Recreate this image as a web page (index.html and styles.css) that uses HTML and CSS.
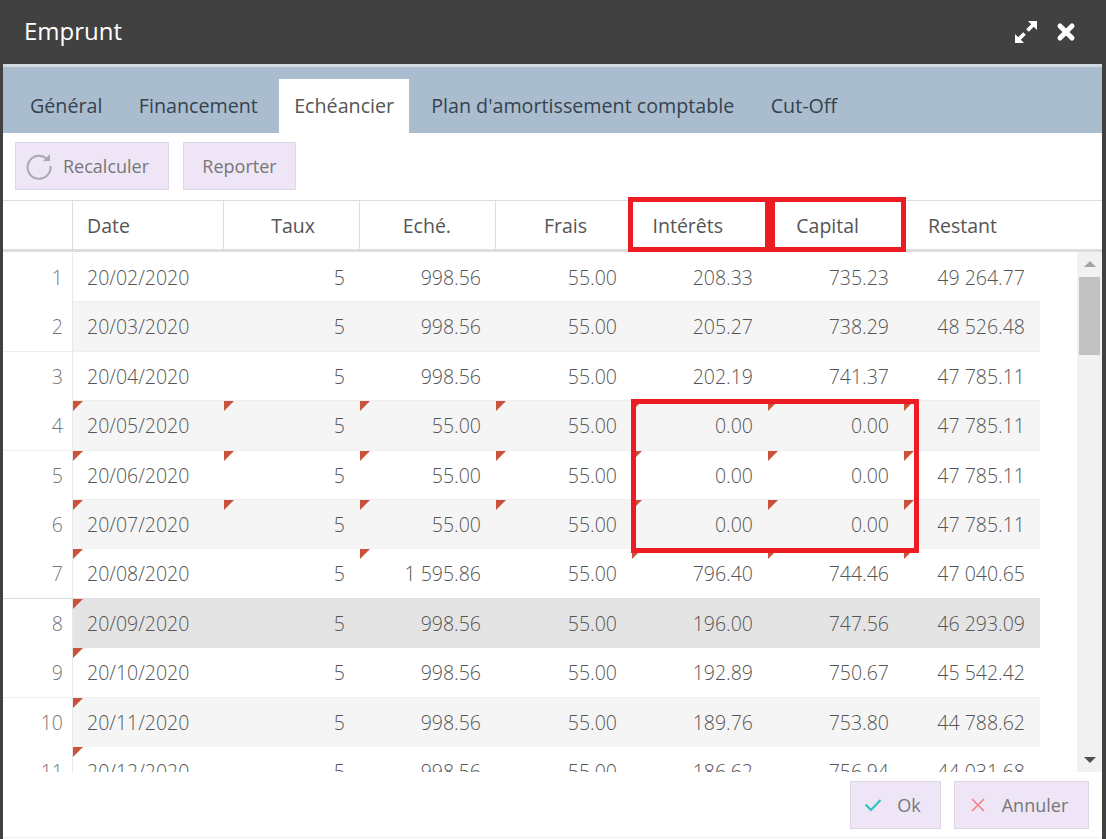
FILE: index.html
```html
<!DOCTYPE html>
<html>
<head>
  <title>Emprunt</title>
  <link rel="stylesheet" href="styles.css">
</head>
<body>

  <div class="dialog">
    <div class="titlebar">
      <span class="title">Emprunt</span>
      <div class="title-icons">
        <svg class="icon-expand" viewBox="0 0 22 22" width="22" height="22">
          <path fill="#fff" d="M13 0H22V9L18.800 5.800 13.800 10.800 11.200 8.200 16.200 3.200Z"/>
          <path fill="#fff" d="M9 22H0V13L3.200 16.200 8.200 11.200 10.800 13.800 5.800 18.800Z"/>
        </svg>
        <svg class="icon-close" viewBox="0 0 20 20" width="20" height="20">
          <path fill="none" stroke="#fff" stroke-width="5" stroke-linecap="round" d="M4 4l12 12M16 4L4 16"/>
        </svg>
      </div>
    </div>

    <div class="tabs">
      <a class="tab" href="#">Général</a>
      <a class="tab" href="#">Financement</a>
      <a class="tab active" href="#">Echéancier</a>
      <a class="tab" href="#">Plan d'amortissement comptable</a>
      <a class="tab" href="#">Cut-Off</a>
    </div>

    <div class="toolbar">
      <button class="btn btn-recalc">
        <svg viewBox="0 0 28 28" width="28" height="28">
          <path fill="none" stroke="#aaa6b0" stroke-width="2" d="M21.500 6.500A11.500 11.500 0 1 0 25.500 14"/>
          <path fill="#aaa6b0" d="M25 2v7h-7z"/>
        </svg>
        Recalculer
      </button>
      <button class="btn btn-report">Reporter</button>
    </div>

    <div class="grid-head">
      <div class="head-cell"></div>
      <div class="head-cell left">Date</div>
      <div class="head-cell">Taux</div>
      <div class="head-cell">Eché.</div>
      <div class="head-cell">Frais</div>
      <div class="head-cell">Intérêts</div>
      <div class="head-cell">Capital</div>
      <div class="head-cell last">Restant</div>
    </div>

    <div class="grid-wrap">
      <div class="grid-body">
        <div class="row"><div class="num">1</div><div class="cell left">20/02/2020</div><div class="cell">5</div><div class="cell">998.56</div><div class="cell">55.00</div><div class="cell">208.33</div><div class="cell">735.23</div><div class="cell">49 264.77</div></div>
        <div class="row odd"><div class="num">2</div><div class="cell left">20/03/2020</div><div class="cell">5</div><div class="cell">998.56</div><div class="cell">55.00</div><div class="cell">205.27</div><div class="cell">738.29</div><div class="cell">48 526.48</div></div>
        <div class="row"><div class="num">3</div><div class="cell left">20/04/2020</div><div class="cell">5</div><div class="cell">998.56</div><div class="cell">55.00</div><div class="cell">202.19</div><div class="cell">741.37</div><div class="cell">47 785.11</div></div>
        <div class="row odd"><div class="num">4</div><div class="cell left flag">20/05/2020</div><div class="cell flag">5</div><div class="cell flag">55.00</div><div class="cell flag">55.00</div><div class="cell flag">0.00</div><div class="cell flag">0.00</div><div class="cell flag">47 785.11</div></div>
        <div class="row"><div class="num">5</div><div class="cell left flag">20/06/2020</div><div class="cell flag">5</div><div class="cell flag">55.00</div><div class="cell flag">55.00</div><div class="cell flag">0.00</div><div class="cell flag">0.00</div><div class="cell flag">47 785.11</div></div>
        <div class="row odd"><div class="num">6</div><div class="cell left flag">20/07/2020</div><div class="cell flag">5</div><div class="cell flag">55.00</div><div class="cell flag">55.00</div><div class="cell flag">0.00</div><div class="cell flag">0.00</div><div class="cell flag">47 785.11</div></div>
        <div class="row"><div class="num">7</div><div class="cell left flag">20/08/2020</div><div class="cell">5</div><div class="cell flag">1 595.86</div><div class="cell">55.00</div><div class="cell flag">796.40</div><div class="cell flag">744.46</div><div class="cell flag">47 040.65</div></div>
        <div class="row selected"><div class="num">8</div><div class="cell left flag">20/09/2020</div><div class="cell">5</div><div class="cell">998.56</div><div class="cell">55.00</div><div class="cell">196.00</div><div class="cell">747.56</div><div class="cell">46 293.09</div></div>
        <div class="row"><div class="num">9</div><div class="cell left flag">20/10/2020</div><div class="cell">5</div><div class="cell">998.56</div><div class="cell">55.00</div><div class="cell">192.89</div><div class="cell">750.67</div><div class="cell">45 542.42</div></div>
        <div class="row odd"><div class="num">10</div><div class="cell left flag">20/11/2020</div><div class="cell">5</div><div class="cell">998.56</div><div class="cell">55.00</div><div class="cell">189.76</div><div class="cell">753.80</div><div class="cell">44 788.62</div></div>
        <div class="row"><div class="num">11</div><div class="cell left flag">20/12/2020</div><div class="cell">5</div><div class="cell">998.56</div><div class="cell">55.00</div><div class="cell">186.62</div><div class="cell">756.94</div><div class="cell">44 031.68</div></div>
      </div>
      <div class="scrollbar">
        <span class="arrow up"></span>
        <div class="track"><div class="thumb"></div></div>
        <span class="arrow down"></span>
      </div>
    </div>

    <div class="footer">
      <button class="btn btn-ok">
        <svg viewBox="0 0 18 14" width="18" height="14">
          <path fill="none" stroke="#2ec4c0" stroke-width="2.2" d="M1.500 6.500l5.500 5.500 9.500-10"/>
        </svg>
        Ok
      </button>
      <button class="btn btn-cancel">
        <svg viewBox="0 0 14 14" width="14" height="14">
          <path fill="none" stroke="#f0828c" stroke-width="1.6" d="M1 1l12 12M13 1L1 13"/>
        </svg>
        Annuler
      </button>
    </div>

    <!-- red annotation boxes drawn over the grid -->
    <div class="mark mark-interets"></div>
    <div class="mark mark-capital"></div>
    <div class="mark mark-zeros"></div>
  </div>

</body>
</html>
```

FILE: styles.css
```css
html, body {
  margin: 0;
  padding: 0;
  height: 100%;
}

body {
  background-color: #414141;
  font-family: "Open Sans", Arial, sans-serif;
  overflow: hidden;
}

.dialog {
  position: relative;
  display: flex;
  flex-direction: column;
  width: 1099px;
  height: 839px;
  margin-left: 3px;
  background-color: #fff;
}

.titlebar {
  display: flex;
  align-items: center;
  justify-content: space-between;
  height: 64px;
  padding: 0 26px 0 21px;
  background-color: #414141;
  border-bottom: 3px solid #d3dbe1;
  color: #fff;
  flex: none;
}

.title {
  font-size: 24px;
  margin-bottom: 3px;
}

.title-icons {
  display: flex;
  align-items: center;
  gap: 19px;
}

.tabs {
  display: flex;
  align-items: flex-end;
  height: 66px;
  padding-left: 12px;
  background-color: #aabdce;
  flex: none;
}

.tab {
  height: 54px;
  line-height: 54px;
  padding: 0 15px;
  margin-right: 6.3px;
  font-size: 19.7px;
  font-weight: 400;
  color: #36424e;
  text-decoration: none;
}

.tab.active {
  background-color: #fff;
  color: #555;
  margin-right: 7px;
}

.toolbar {
  display: flex;
  gap: 14px;
  height: 67px;
  padding: 9px 0 0 12px;
  box-sizing: border-box;
  flex: none;
}

.btn {
  display: flex;
  align-items: center;
  justify-content: center;
  box-sizing: border-box;
  height: 48px;
  padding: 0;
  background-color: #eee6f6;
  border: 1px solid #dcd6e6;
  font-family: inherit;
  font-size: 18px;
  color: #777;
  cursor: pointer;
}

.btn-recalc {
  width: 154px;
  gap: 10px;
  justify-content: flex-start;
  padding-left: 9px;
}

.btn-report {
  width: 113px;
}

.grid-head {
  display: grid;
  grid-template-columns: 70px 151px repeat(6, 136px);
  height: 52px;
  box-sizing: border-box;
  border-top: 1px solid #ddd;
  border-bottom: 3px solid #ddd;
  flex: none;
}

.head-cell {
  line-height: 49px;
  padding-right: 44px;
  text-align: right;
  font-size: 19.5px;
  color: #555;
  border-right: 1px solid #ddd;
}

.head-cell.left {
  padding: 0 0 0 14px;
  text-align: left;
}

.head-cell.last {
  padding-right: 43px;
  border-right: none;
}

.grid-wrap {
  display: flex;
  justify-content: space-between;
  height: 520px;
  overflow: hidden;
  flex: none;
}

.grid-body {
  width: 1037px;
  padding-top: 1px;
}

.row {
  display: grid;
  grid-template-columns: 70px 151px repeat(6, 136px);
  height: 49.4px;
  box-sizing: border-box;
  border-bottom: 1px solid #eee;
  font-size: 19.5px;
  font-weight: 300;
  color: #555;
}

.num {
  line-height: 49px;
  padding-right: 9px;
  text-align: right;
  color: #777;
  background-color: #fff;
  border-right: 1px solid #e8e8e8;
}

.cell {
  position: relative;
  line-height: 49px;
  padding-right: 15px;
  text-align: right;
}

.cell.left {
  padding: 0 0 0 14px;
  text-align: left;
}

.flag::before {
  content: "";
  position: absolute;
  left: 0;
  top: 0;
  border-top: 10px solid #c9523a;
  border-right: 10px solid transparent;
}

.row.odd .cell {
  background-color: #f5f5f5;
}

.row.selected .cell {
  background-color: #e4e4e4;
}

.row.selected {
  border-top: 1px solid #ddd;
  margin-top: -1px;
  height: 50.4px;
}

.scrollbar {
  display: flex;
  flex-direction: column;
  align-items: center;
  width: 25px;
  background-color: #f1f1f1;
}

.arrow {
  flex: none;
  width: 0;
  height: 0;
  border-left: 6px solid transparent;
  border-right: 6px solid transparent;
}

.arrow.up {
  margin-top: 9px;
  border-bottom: 6px solid #a3a3a3;
}

.arrow.down {
  margin-bottom: 9px;
  border-top: 6px solid #505050;
}

.track {
  flex: 1;
  width: 100%;
  padding-top: 10px;
}

.thumb {
  width: 21px;
  height: 78px;
  margin: 0 auto;
  background-color: #c1c1c1;
}

.footer {
  display: flex;
  justify-content: flex-end;
  gap: 13px;
  height: 66px;
  padding: 9px 13px 0 0;
  box-sizing: border-box;
  border-bottom: 1px solid #eee;
  flex: none;
}

.btn-ok {
  width: 91px;
  gap: 15px;
  padding-right: 6px;
}

.btn-cancel {
  width: 135px;
  gap: 17px;
  padding-right: 4px;
}

.mark {
  position: absolute;
  box-sizing: border-box;
  border: 5px solid #ed1c24;
  pointer-events: none;
}

.mark-interets {
  left: 625px;
  top: 197px;
  width: 142px;
  height: 55px;
}

.mark-capital {
  left: 767px;
  top: 197px;
  width: 136px;
  height: 55px;
}

.mark-zeros {
  left: 628px;
  top: 399px;
  width: 288px;
  height: 154px;
}
```
